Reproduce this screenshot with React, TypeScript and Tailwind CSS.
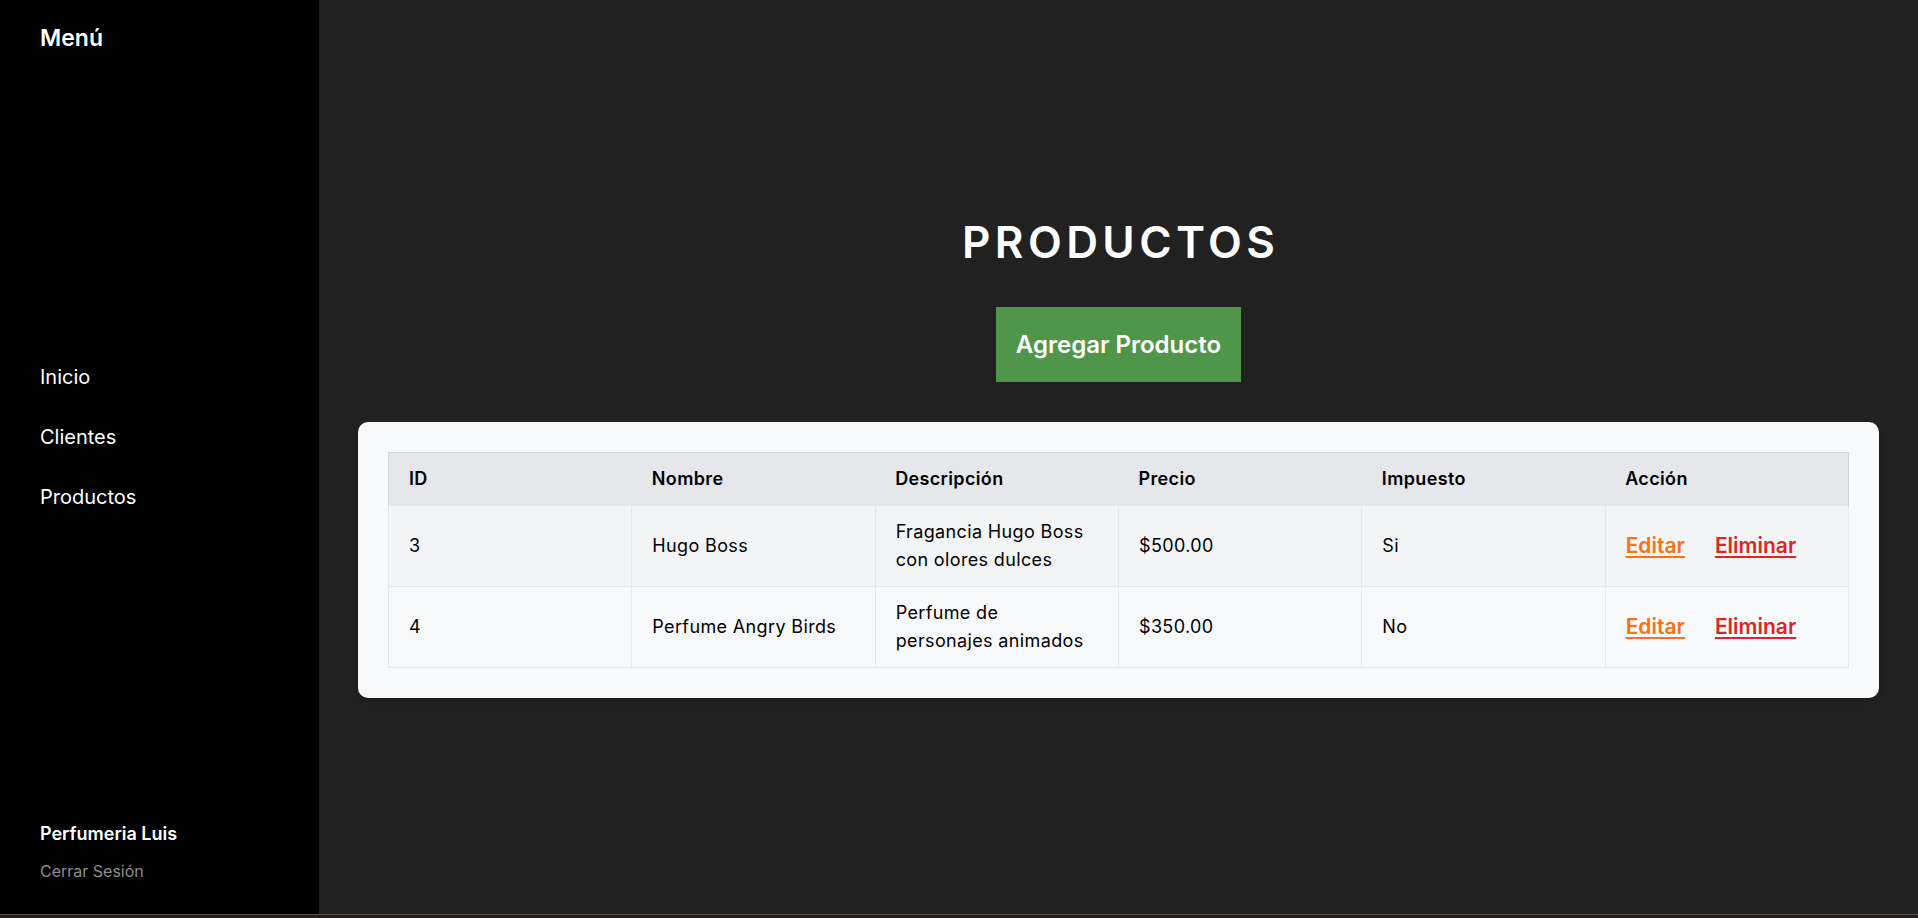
import React from 'react';

interface Producto {
  id: number;
  nombre: string;
  descripcion: string;
  precio: string;
  impuesto: string;
}

const productos: Producto[] = [
  { id: 3, nombre: 'Hugo Boss', descripcion: 'Fragancia Hugo Boss con olores dulces', precio: '$500.00', impuesto: 'Si' },
  { id: 4, nombre: 'Perfume Angry Birds', descripcion: 'Perfume de personajes animados', precio: '$350.00', impuesto: 'No' },
];

const columnas = ['ID', 'Nombre', 'Descripción', 'Precio', 'Impuesto', 'Acción'];

function Sidebar() {
  return (
    <aside className="w-[319px] shrink-0 bg-black text-white flex flex-col justify-between px-10 pt-[22px] pb-[31px]">
      <h2 className="text-[23px] leading-8 font-semibold">Menú</h2>

      <nav className="flex flex-col gap-8 text-xl leading-7">
        <a href="#">Inicio</a>
        <a href="#">Clientes</a>
        <a href="#">Productos</a>
      </nav>

      <div className="flex flex-col gap-[11px]">
        <span className="text-lg leading-7 font-semibold">Perfumeria Luis</span>
        <a href="#" className="text-base leading-6 text-[#8c8c8c]">Cerrar Sesión</a>
      </div>
    </aside>
  );
}

function TablaProductos() {
  return (
    <div className="w-full bg-[#f8f9fa] rounded-[10px] p-[30px] shadow-md">
      <table className="w-full table-fixed border-collapse text-lg leading-7 tracking-[0.02em] text-black">
        <thead>
          <tr className="bg-[#e5e7eb]">
            {columnas.map((c) => (
              <th key={c} className="text-left font-semibold px-5 py-3 border-t border-[#d1d5db] first:border-l last:border-r">
                {c}
              </th>
            ))}
          </tr>
        </thead>
        <tbody>
          {productos.map((p, i) => (
            <tr key={p.id} className={i % 2 === 0 ? 'bg-[#f3f4f6]' : 'bg-[#f8f9fa]'}>
              <td className="px-5 py-3 border border-[#e5e7eb]">{p.id}</td>
              <td className="px-5 py-3 border border-[#e5e7eb]">{p.nombre}</td>
              <td className="px-5 py-3 border border-[#e5e7eb]">{p.descripcion}</td>
              <td className="px-5 py-3 border border-[#e5e7eb]">{p.precio}</td>
              <td className="px-5 py-3 border border-[#e5e7eb]">{p.impuesto}</td>
              <td className="px-5 py-3 border border-[#e5e7eb]">
                <div className="flex gap-[30px] text-[21px] tracking-normal font-semibold">
                  <a href="#" className="text-[#f97316] underline underline-offset-[3px]">Editar</a>
                  <a href="#" className="text-[#dc2626] underline underline-offset-[3px]">Eliminar</a>
                </div>
              </td>
            </tr>
          ))}
        </tbody>
      </table>
    </div>
  );
}

export default function App() {
  return (
    <div className="w-full h-[918px] flex flex-col font-['Inter','Noto_Sans',sans-serif]">
      <div className="flex flex-1 min-h-0">
        <Sidebar />

        <main className="flex-1 bg-[#212121] flex flex-col items-center justify-center px-[39px]">
          <h1 className="text-white text-[44px] leading-[53px] font-semibold tracking-[0.1em] mb-[38px] pl-[0.1em]">
            PRODUCTOS
          </h1>
          <button className="bg-[#50964a] text-white text-2xl font-semibold h-[75px] px-5 mb-10">
            Agregar Producto
          </button>
          <TablaProductos />
        </main>
      </div>

      {/* franja inferior */}
      <div className="h-[4px] bg-[#2c1d1b] border-t border-[#5a5050]" />
    </div>
  );
}
